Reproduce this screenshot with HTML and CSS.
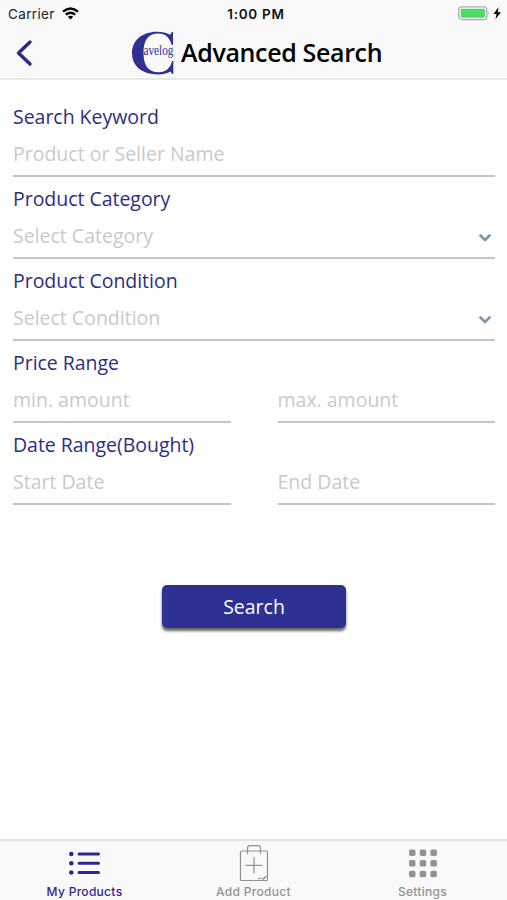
FILE: index.html
```html
<!DOCTYPE html>
<html lang="en">
<head>
<meta charset="utf-8">
<title>Advanced Search</title>
<link rel="stylesheet" href="styles.css">
</head>
<body>
<header class="header">
  <div class="status">
    <div class="carrier"><span>Carrier</span>
      <svg width="17" height="13" viewBox="0 0 17 13" fill="none" stroke="#000" stroke-width="2.3"><path d="M1 4.7Q8.5-1.7 16 4.7M3.8 7.7Q8.5 3.8 13.2 7.7"/><path d="M5.8 9.8Q8.5 7.6 11.2 9.8L8.5 12.6Z" fill="#000" stroke="none"/></svg>
    </div>
    <time class="clock">1:00 PM</time>
    <svg class="battery" width="44" height="15" viewBox="0 0 44 15"><rect x=".8" y=".8" width="28" height="12.8" rx="3.2" fill="#fff" stroke="#aaa" stroke-width="1.3"/><rect x="2.7" y="2.7" width="24.2" height="9" rx="1" fill="#4cd964"/><path d="M30.3 5q1.7 2.2 0 4.5z" fill="#aaa"/><path d="M40.5 1.2L35.5 8h3.1l-1.2 5.2L43 6.2h-3.3z" fill="#000"/></svg>
  </div>
  <div class="navbar">
    <svg class="back" width="18" height="28" viewBox="0 0 18 28"><path d="M15 3L3.5 14l11.5 11" fill="none" stroke="#2c2888" stroke-width="3.4" stroke-linecap="round" stroke-linejoin="round"/></svg>
    <div class="title">
      <svg class="logo" width="43" height="44" viewBox="0 0 43 44"><path d="M41 1V14H39.8C37.5 6 33 2.4 26.5 2.4C16 2.4 11.5 9 11.5 22C11.5 35 16.5 41.2 26.5 41.2C34 41.2 38.5 37 40 30H41.3V43H40L38.7 40.4C35 42.5 31 43.4 26 43.4C10 43.4 0 35 0 22.2C0 9.5 10 .8 25 .8C30.5 .8 34.5 1.8 38.2 3.7L39.8 1Z" fill="#2e3092"/><text x="11.5" y="24" textLength="30" lengthAdjust="spacingAndGlyphs" class="logo-text">avelog</text></svg>
      <h1>Advanced Search</h1>
    </div>
  </div>
</header>
<main class="form">
  <div class="field"><label>Search Keyword</label><div class="value">Product or Seller Name</div></div>
  <div class="field"><label>Product Category</label><div class="value">Select Category<svg class="chevron" width="14" height="10" viewBox="0 0 14 10"><path d="M2.5 2.5L7 7l4.5-4.5"/></svg></div></div>
  <div class="field"><label>Product Condition</label><div class="value">Select Condition<svg class="chevron" width="14" height="10" viewBox="0 0 14 10"><path d="M2.5 2.5L7 7l4.5-4.5"/></svg></div></div>
  <div class="field"><label>Price Range</label><div class="pair"><div class="value">min. amount</div><div class="value">max. amount</div></div></div>
  <div class="field"><label>Date Range(Bought)</label><div class="pair"><div class="value">Start Date</div><div class="value">End Date</div></div></div>
  <button class="search">Search</button>
</main>
<nav class="tabs">
  <a class="tab active"><svg width="34" height="42" viewBox="0 0 34 42"><g fill="#2c2888"><circle cx="3.3" cy="13" r="2.3"/><circle cx="3.3" cy="22.3" r="2.3"/><circle cx="3.3" cy="31.5" r="2.3"/></g><path d="M11 13H30.500M11 22.3H30.500M11 31.5H30.500" stroke="#2c2888" stroke-width="3" stroke-linecap="round"/></svg><span>My Products</span></a>
  <a class="tab"><svg width="34" height="42" viewBox="0 0 34 42" fill="none" stroke="#929292" stroke-width="1.200"><rect x="3.5" y="10" width="27" height="29.5" rx="1"/><path d="M10.5 13V7Q10.5 4.6 13 4.6H21Q23.5 4.6 23.5 7V13M17 16V32.5M8.5 24.3H25.5"/><path d="M21 38l3-1 1 1 5-3M26 39l4-4" stroke-width="1"/></svg><span>Add Product</span></a>
  <a class="tab"><svg width="34" height="42" viewBox="0 0 34 42" fill="#929292"><g id="dots"><rect x="3" y="8.4" width="6.5" height="6.5" rx="1.7"/><rect x="13.7" y="8.4" width="6.5" height="6.5" rx="1.7"/><rect x="24.4" y="8.4" width="6.5" height="6.5" rx="1.7"/></g><use href="#dots" y="10.7"/><use href="#dots" y="21.4"/></svg><span>Settings</span></a>
</nav>
</body>
</html>
```

FILE: styles.css
```css
* { box-sizing: border-box; }
body {
  margin: 0;
  height: 900px;
  display: flex;
  flex-direction: column;
  background: #fff;
  font-family: "Open Sans", sans-serif;
  overflow: hidden;
}
.header {
  height: 80px;
  flex: none;
  background: #f9f9f9;
  border-bottom: 2px solid #e8e8e8;
}
.status {
  height: 27px;
  display: grid;
  grid-template-columns: 1fr auto 1fr;
  align-items: center;
  padding: 0 5px 0 8px;
  font: 13.5px Inter, sans-serif;
  color: #222;
}
.carrier { display: flex; align-items: center; gap: 7px; letter-spacing: .35px; }
.clock { font-weight: 600; color: #111; letter-spacing: .7px; padding-left: 2px; }
.battery { justify-self: end; }
.navbar {
  height: 51px;
  display: grid;
  grid-template-columns: 117px 1fr;
  align-items: center;
  padding-left: 15px;
}
.title { display: flex; align-items: center; gap: 6px; }
.logo { overflow: visible; }
.logo-text { font: 14px "Liberation Serif", serif; fill: #2e3092; }
h1 { margin: 0; font-size: 25px; font-weight: 600; line-height: 48px; height: 50px; letter-spacing: -.35px; color: #000; white-space: nowrap; }
.form { flex: 1; padding: 14px 12px 0 13px; }
.field { height: 82px; padding-top: 9px; color: #2e2e80; }
label { display: block; font-size: 19.5px; line-height: 28px; height: 28px; letter-spacing: -.03px; }
.value {
  height: 46px;
  display: flex;
  flex: 1;
  align-items: center;
  justify-content: space-between;
  border-bottom: 2px solid #c4c4c4;
  font-size: 19.5px;
  color: #c9c9cc;
}
.pair { display: flex; gap: 47px; }
.chevron { margin: 5px 3px 0 0; fill: none; stroke: #8094b4; stroke-width: 2.7; stroke-linecap: round; stroke-linejoin: round; }
.search {
  display: block;
  width: 184px;
  height: 43px;
  margin: 81px auto 0;
  padding: 0;
  border: 0;
  border-radius: 5px;
  background: #2e3092;
  box-shadow: 0 3px 3px rgba(0, 0, 0, .6);
  color: #fff;
  font: 19.5px "Open Sans", sans-serif;
}
.tabs {
  height: 61px;
  display: grid;
  grid-template-columns: repeat(3, 1fr);
  background: #f9f9f9;
  border-top: 2px solid #e4e4e4;
}
.tab { display: flex; flex-direction: column; align-items: center; color: #929292; font: 500 12px/18px Inter, sans-serif; letter-spacing: .3px; }
.tab svg { flex: none; }
.tab.active { color: #2c2888; }
```
